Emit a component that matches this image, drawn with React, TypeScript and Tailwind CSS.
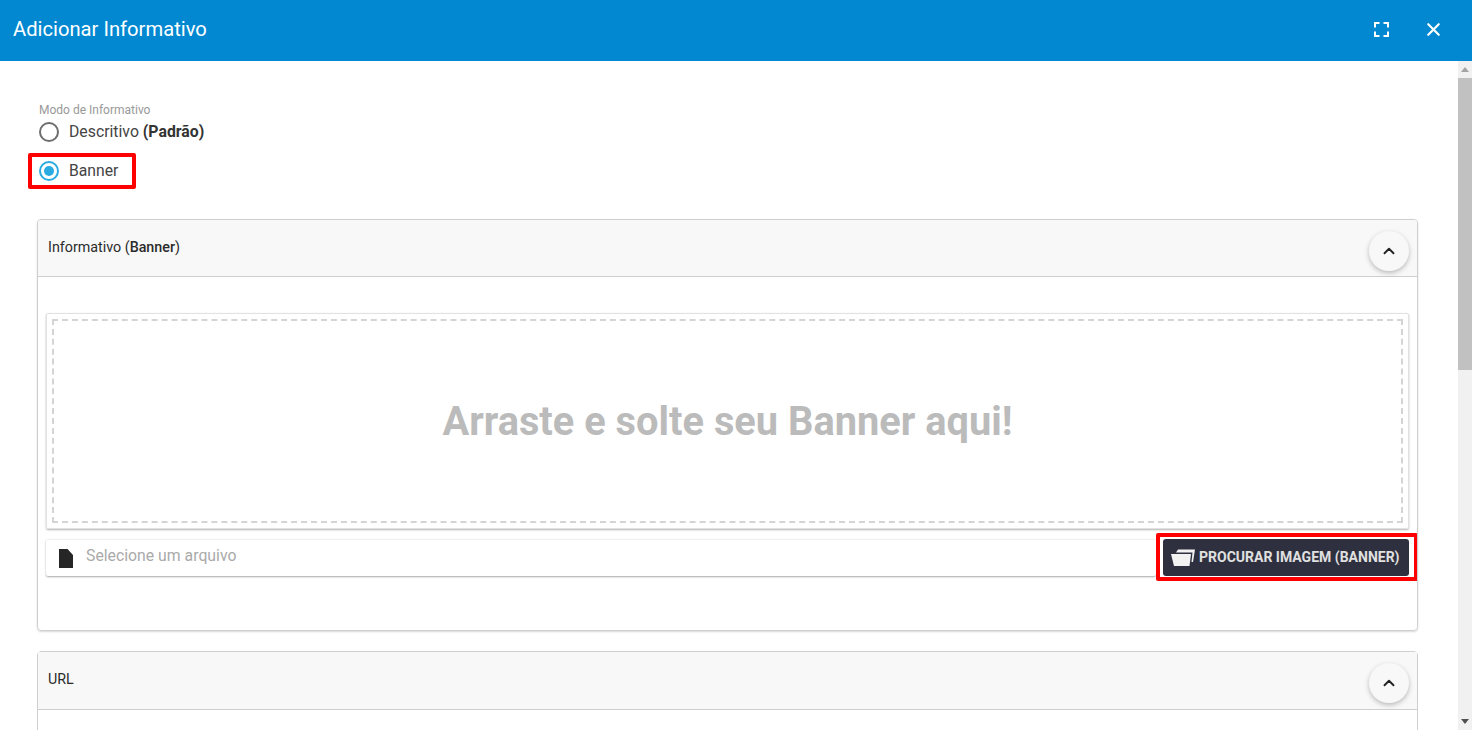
import {ChevronUp, X} from "lucide-react";
import {clsx} from "clsx";

const font = "font-['Roboto',sans-serif]";

const FullscreenIcon = () => (
  <svg width="15" height="15" viewBox="0 0 15 15" fill="none" stroke="#fff" strokeWidth="2">
    <path d="M1 5.500V1h4.500M9.500 1H14v4.500M14 9.500V14H9.500M5.500 14H1V9.500" />
  </svg>
);

const FileIcon = () => (
  <svg width="14" height="19" viewBox="0 0 14 19" fill="#262626">
    <path d="M0 0h8.500L14 6v13H0z" />
  </svg>
);

const FolderIcon = () => (
  <svg width="24" height="17" viewBox="0 0 24 17" fill="#f2f2f2">
    <path d="M5 3.500 7 .5h17L22 13h-1.500l1-9.500z" />
    <path d="M0 5h20l-1.500 12H3z" />
  </svg>
);

const CardHeader = ({children, tall}: {children: React.ReactNode; tall?: boolean}) => (
  <div
    className={clsx(
      "flex items-center justify-between border-b border-[#cfcfcf] bg-[#f8f8f8] pl-[10px] pr-2",
      tall ? "h-[58px] pb-px" : "h-[57px]"
    )}
  >
    <span className="text-[14.3px] text-[#2b2b2b]">{children}</span>
    <button
      type="button"
      className="mt-[6px] flex h-10 w-10 items-center justify-center rounded-full bg-[#f8f8f8] shadow-[0_2px_5px_rgba(0,0,0,0.25)]"
    >
      <ChevronUp size={18} strokeWidth={2.5} color="#222" />
    </button>
  </div>
);

export default function App() {
  return (
    <div className={`${font} flex h-[730px] w-full flex-col overflow-hidden bg-white`}>
      <header className="flex h-[61px] shrink-0 items-center justify-between bg-[#0288d1] pb-[3px] pl-[13px] pr-[28px] text-white">
        <h1 className="text-[20.2px] font-normal">Adicionar Informativo</h1>
        <div className="flex items-center gap-[34px]">
          <FullscreenIcon />
          <X size={21} strokeWidth={2.5} color="#fff" />
        </div>
      </header>

      <div className="flex min-h-0 flex-1">
        <main className="min-w-0 flex-1 overflow-hidden pl-[37px] pr-10">
          <div className="pl-[2px] pt-[42px] text-[12px] leading-[15px] text-[#999]">Modo de Informativo</div>
          <label className="flex h-[28px] items-center gap-[10px] pl-[2px] text-[15.8px] text-[#444]">
            <span className="h-5 w-5 rounded-full border-2 border-[#6e6e6e]" />
            <span>
              Descritivo <b className="font-bold text-[#333]">(Padrão)</b>
            </span>
          </label>
          <div className="-ml-[9px] mt-[7px] flex h-9 w-[108px] items-center gap-[10px] rounded-[2px] border-4 border-[#ff0000] pl-[7px] text-[15.7px] text-[#444]">
            <span className="flex h-5 w-5 items-center justify-center rounded-full border-2 border-[#29abe2]">
              <span className="h-[10px] w-[10px] rounded-full bg-[#29abe2]" />
            </span>
            <span>Banner</span>
          </div>

          <section className="mt-[30px] h-[412px] overflow-hidden rounded border border-[#cfcfcf] shadow-[0_1px_2px_rgba(0,0,0,0.15)]">
            <CardHeader>
              Informativo (<span className="font-medium">Banner</span>)
            </CardHeader>
            <div className="px-2 pt-9">
              <div className="rounded-[2px] border border-[#e2e2e2] p-[5px] shadow-[0_1px_2px_rgba(0,0,0,0.3)]">
                <div className="flex h-[204px] items-center justify-center border-2 border-dashed border-[#d4d4d4] pt-[2px] text-[39.8px] font-bold text-[#bbbbbb]">
                  Arraste e solte seu Banner aqui!
                </div>
              </div>
              <div className="mt-[10px] flex h-[37px] items-stretch">
                <div className="flex flex-1 items-center gap-[13px] rounded-[2px] border-t border-[#f2f2f2] pl-[13px] shadow-[0_1px_2px_rgba(0,0,0,0.35)]">
                  <FileIcon />
                  <span className="-mt-[4px] text-[15.8px] text-[#aaa]">Selecione um arquivo</span>
                </div>
                <div className="-mb-[5px] -mr-[9px] -mt-[6px] w-[262px] rounded-[2px] border-4 border-[#ff0000] pb-[1px] pl-[3px] pr-[5px] pt-[2px]">
                  <button
                    type="button"
                    className="flex h-[37px] w-[246px] items-center gap-[4px] rounded-[3px] bg-[#2e303f] pl-2 text-[14px] font-bold whitespace-nowrap text-[#e0e0e0]"
                  >
                    <FolderIcon />
                    PROCURAR IMAGEM (BANNER)
                  </button>
                </div>
              </div>
            </div>
          </section>

          <section className="mt-5 rounded border border-[#cfcfcf]">
            <CardHeader tall>URL</CardHeader>
            <div className="h-10 bg-white" />
          </section>
        </main>

        <div className="flex w-[14px] shrink-0 flex-col items-center bg-[#f1f1f1]">
          <div className="flex h-[17px] items-center justify-center">
            <div className="h-0 w-0 border-x-[4px] border-b-[5px] border-x-transparent border-b-[#a3a3a3]" />
          </div>
          <div className="h-[292px] w-full bg-[#c1c1c1]" />
          <div className="mt-auto flex h-[17px] items-center justify-center">
            <div className="h-0 w-0 border-x-[4px] border-t-[5px] border-x-transparent border-t-[#505050]" />
          </div>
        </div>
      </div>
    </div>
  );
}
